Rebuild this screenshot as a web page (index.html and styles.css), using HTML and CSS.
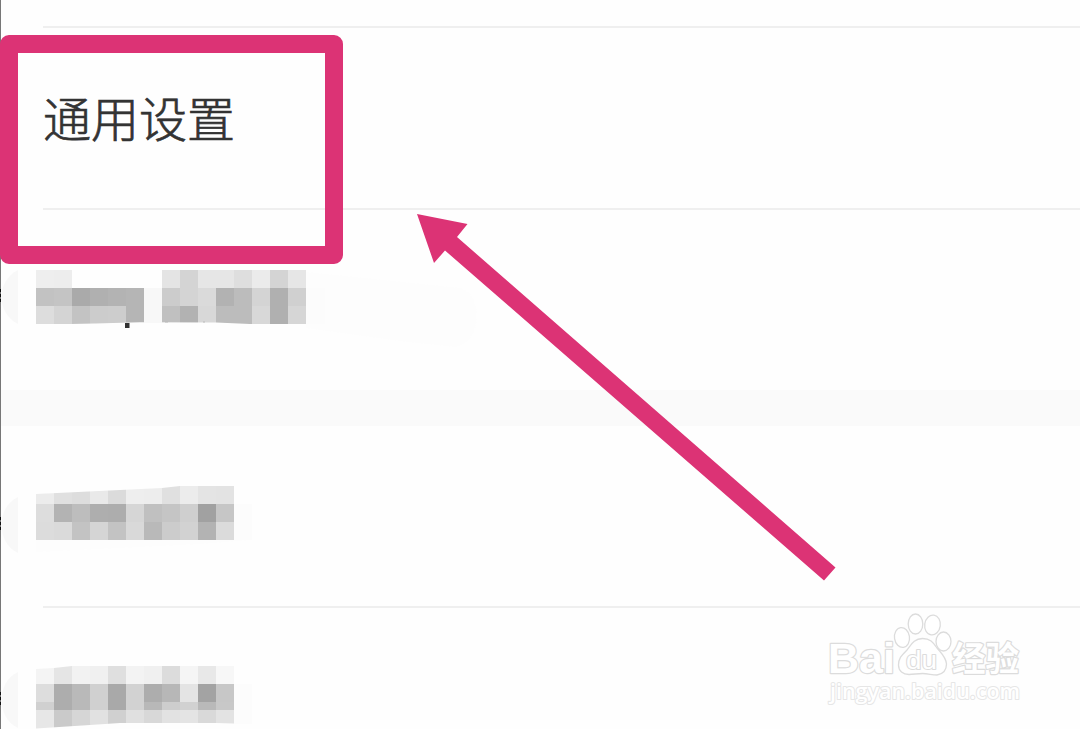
FILE: index.html
```html
<!DOCTYPE html>
<html lang="zh-CN">
<head>
  <meta charset="UTF-8">
  <title>通用设置</title>
  <link rel="stylesheet" href="styles.css">
</head>
<body>
<main class="page">
  <div class="row row-top"></div>
  <div class="row row-general">通用设置</div>
  <div class="row row-first">
    <svg class="mosaic" width="500" height="90" viewBox="0 0 500 90">
      <clipPath id="c1"><path d="M36 0H306V54H250L216 52.5 140 52.3 95 53.5 70 54H36z"/></clipPath>
      <path d="M18 0V54C-4 43-4 11 18 0z" fill="#f8f8f8"/>
      <path d="M306 2L355 7 460 18C482 24 484 70 455 77L400 71 306 58z" fill="#fdfdfd"/>
      <path d="M306 18H325V54H306z" fill="#fcfcfc"/>
      <path d="M144 18h18v35h-18z" fill="#f8f8f8"/>
      <g clip-path="url(#c1)" data-cells="ee ed -- -- -- -- -- e4 d4 e6 e6 de eb d4 e6|c2 c4 aa b0 b3 b5 f8 cc d4 da b2 bc d4 b0 d0|dd d4 c3 cc cd b5 f8 c0 b2 d8 bc bc d8 b0 d6"></g>
      <path d="M125 53h4.500v5h-4.500z" fill="#333"/>
      <path d="M165 52h3M203 52h2" stroke="#bbb"/>
      <path d="M.500 19v14" class="ticks"/>
    </svg>
  </div>
  <div class="band"></div>
  <div class="row row-second">
    <svg class="mosaic" width="500" height="72" viewBox="0 0 500 72">
      <clipPath id="c2"><path d="M36 8L162 2 180 0H234V54H36z"/></clipPath>
      <path d="M18 11V67C-4 57-4 21 18 11z" fill="#f8f8f8"/>
      <path d="M36 54H250L200 58 36 66z" fill="#fdfdfd"/>
      <path d="M234 18h18v36h-18z" fill="#fcfcfc"/>
      <g clip-path="url(#c2)" data-cells="ec e0 dd e9 db ee ed e0 ec e4 e3|dd b3 bd ae ad d6 c0 c5 cf a1 c6|dc da c3 d5 c3 d9 b9 cc d2 b3 db"></g>
      <path d="M.500 31v15" class="ticks"/>
    </svg>
  </div>
  <div class="row row-third">
    <svg class="mosaic" width="500" height="63" viewBox="0 0 500 63">
      <clipPath id="c3"><path d="M36 3L54 2 72 0H234V57.500L216 57H120L90 59 36 62.500z"/></clipPath>
      <path d="M18 6V62C-4 52-4 16 18 6z" fill="#f8f8f8"/>
      <path d="M234 18h18v40h-18z" fill="#fcfcfc"/>
      <g clip-path="url(#c3)" data-cells="f4 e5 f2 f0 df f3 f0 dc f5 e8 f7|dd ad b9 d0 a9 d2 ad b7 e4 a3 c7|d0 ad b9 d0 a9 d2 b8 cd d1 b9 c8|e7 ca d6 e1 d0 e0 d8 e2 e4 d9 e3" data-heights="18 18 8 19"></g>
      <path d="M.500 26v14" class="ticks"/>
    </svg>
  </div>
</main>

<div class="highlight"></div>

<svg class="arrow" width="430" height="380" viewBox="410 205 430 380">
  <path d="M417 214L467.500 224 457 237 835.500 567.500 824 580.500 445 250.500 434 263z"/>
</svg>

<svg class="watermark" width="210" height="105" viewBox="820 608 210 105">
  <text class="brand" x="828" y="673" textLength="67" lengthAdjust="spacingAndGlyphs">Bai</text>
  <g class="paw">
    <ellipse cx="902" cy="637.500" rx="7.500" ry="10" transform="rotate(-8 902 637.500)"/>
    <ellipse cx="915.500" cy="624" rx="7.300" ry="10"/>
    <ellipse cx="932.500" cy="625" rx="7.800" ry="10" transform="rotate(8 932.500 625)"/>
    <ellipse cx="943.500" cy="641.500" rx="7.500" ry="9.500"/>
    <path d="M922.500 638.500C914 638.500 911 645 907 650 902 655 898.500 658 898.500 665 898.500 671 903 674.500 909 674.500 914 674.500 917 673.500 922.500 673.500 928 673.500 932 675 937 675 943 674 946.500 670 946.500 664 946 657 941 653 937 648 933 642 930 638.500 922.500 638.500z"/>
  </g>
  <text class="du" x="906" y="669" textLength="31" lengthAdjust="spacingAndGlyphs">du</text>
  <text class="cn" x="952" y="671" textLength="67" lengthAdjust="spacingAndGlyphs">经验</text>
  <text class="site" x="830" y="699" textLength="190" lengthAdjust="spacingAndGlyphs">jingyan.baidu.com</text>
</svg>

<script>
// fill the mosaics: each pair is a grey level, "--" leaves the cell empty
document.querySelectorAll("[data-cells]").forEach(function (g) {
  const heights = (g.dataset.heights || "18 18 18").split(" ").map(Number);
  let y = 0;
  g.dataset.cells.split("|").forEach(function (line, r) {
    line.split(" ").forEach(function (c, i) {
      if (c === "--") return;
      const rect = document.createElementNS("http://www.w3.org/2000/svg", "rect");
      rect.setAttribute("x", 36 + i * 18);
      rect.setAttribute("y", y);
      rect.setAttribute("width", 18);
      rect.setAttribute("height", heights[r]);
      rect.setAttribute("fill", "#" + c + c + c);
      g.appendChild(rect);
    });
    y += heights[r];
  });
});
</script>
</body>
</html>
```

FILE: styles.css
```css
* { box-sizing: border-box; }
body { margin: 0; background: #fefefe; color: #333; font-family: "Noto Sans CJK SC", sans-serif; overflow: hidden; }

.page { height: 729px; overflow: hidden; background: linear-gradient(#777, #777) 0 0 / 1px 100% no-repeat; }
.row { position: relative; }
.row-top { height: 28px; }
.row-general { height: 182px; padding: 52px 0 0 43px; font-size: 48px; line-height: 72px; font-weight: 300; -webkit-text-stroke: 0.7px #333; }
.row-first { height: 180px; padding-top: 60px; }
.row-second { height: 182px; padding-top: 60px; }
.row-third { height: 121px; padding-top: 58px; }
.band { height: 36px; margin-left: 1px; background: #fafafa; }

/* separators start at the text indent */
.row-top::after, .row-general::after, .row-second::after { content: ""; position: absolute; left: 43px; right: 0; bottom: 0; height: 2px; background: #efefef; }

.mosaic { display: block; }
.mosaic rect { shape-rendering: crispEdges; }
.ticks { stroke: #111; stroke-width: 1; stroke-dasharray: 3 2; }

.highlight { position: absolute; left: 0; top: 35px; width: 343px; height: 229px; border: 18px solid #dc3375; border-radius: 9px; }
.arrow { position: absolute; left: 410px; top: 205px; fill: #dc3375; }

.watermark { position: absolute; left: 820px; top: 608px; fill: #fff; stroke: #dcdcdc; stroke-width: 1.3px; stroke-linejoin: round; }
.watermark text { font-family: "Liberation Sans", sans-serif; font-weight: bold; }
.watermark .brand { font-size: 43px; stroke-width: 2.4px; paint-order: stroke; }
.watermark .du { font-size: 25px; font-weight: normal; stroke-width: 2px; paint-order: stroke; }
.watermark .cn { font-family: "Noto Sans CJK SC", sans-serif; font-size: 34px; font-weight: 700; stroke-width: 2.4px; paint-order: stroke; }
.watermark .site { font-family: "Open Sans", sans-serif; font-size: 22px; font-weight: 600; stroke: #e6e6e6; stroke-width: 2px; paint-order: stroke; }
```
